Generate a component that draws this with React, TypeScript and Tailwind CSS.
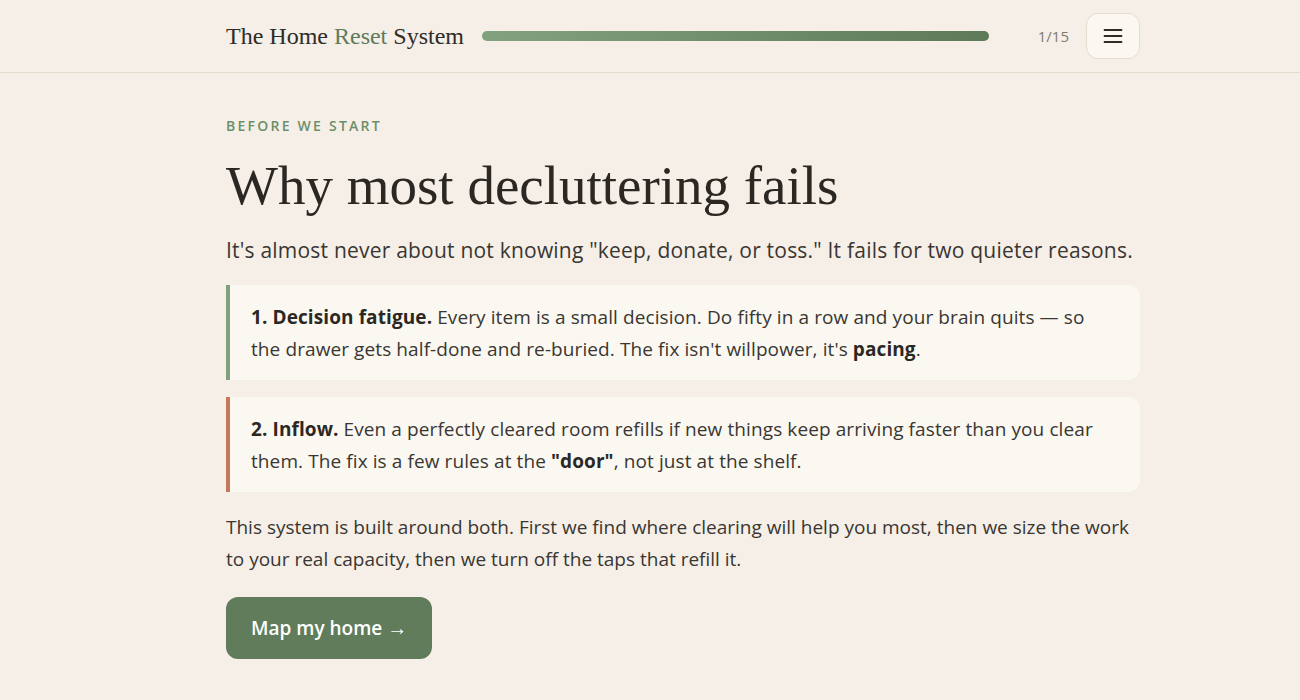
import React from 'react';

const serif = { fontFamily: '"Liberation Serif", "DejaVu Serif", serif' };

function Header() {
  return (
    <header className="h-[73px] border-b border-[#e4dccd]">
      <div className="ml-[226px] flex h-full w-[914px] items-center gap-[18px]">
        <div className="text-[24px] leading-none text-[#2f2b26] whitespace-nowrap" style={serif}>
          The Home <span className="text-[#5f7c5a]">Reset</span> System
        </div>
        <div className="h-[10px] flex-1 rounded-full bg-[#e6dfd3]">
          <div className="h-full w-full rounded-full bg-gradient-to-r from-[#82a27f] to-[#5e7a58]" />
        </div>
        <div className="w-[62px] text-right text-[15px] text-[#807a72]">1/15</div>
        <button className="ml-[-1px] flex h-[46px] w-[54px] items-center justify-center rounded-xl border border-[#e4dccd] bg-[#fbf8f2]">
          <svg width="20" height="16" viewBox="0 0 20 16" fill="none" stroke="#2f2b26" strokeWidth="1.8" strokeLinecap="round">
            <path d="M1.5 2h17M1.5 8h17M1.5 14h17" />
          </svg>
        </button>
      </div>
    </header>
  );
}

function Reason({ border, children }: { border: string; children: React.ReactNode }) {
  return (
    <div className={`rounded-r-xl border-l-4 ${border} bg-[#fbf8f2] pt-[16px] pb-[15px] pl-[21px] pr-6 text-[19px] leading-8 tracking-[0.005em] text-[#3a3631]`}>
      {children}
    </div>
  );
}

export default function App() {
  return (
    <div
      className="min-h-screen bg-[#f5efe8] text-[#2f2b26]"
      style={{ fontFamily: '"Open Sans", "Noto Sans", sans-serif' }}
    >
      <Header />
      <main className="ml-[226px] w-[914px] pt-[42px]">
        <div className="text-[14px] font-semibold uppercase tracking-[0.16em] text-[#6b8f68]">Before we start</div>
        <h1 className="mt-[17px] text-[55px] leading-[66px] text-[#2b2824]" style={serif}>
          Why most decluttering fails
        </h1>
        <p className="mt-[15px] text-[21px] leading-8 tracking-[0.01em] text-[#3a3631]">
          It's almost never about not knowing "keep, donate, or toss." It fails for two quieter reasons.
        </p>
        <div className="mt-[19px] flex flex-col gap-[17px]">
          <Reason border="border-[#7fa07f]">
            <b className="font-bold text-[#2b2824]">1. Decision fatigue.</b> Every item is a small decision. Do fifty in a row and your brain quits — so
            the drawer gets half-done and re-buried. The fix isn't willpower, it's <b className="font-bold text-[#2b2824]">pacing</b>.
          </Reason>
          <Reason border="border-[#c47a5a]">
            <b className="font-bold text-[#2b2824]">2. Inflow.</b> Even a perfectly cleared room refills if new things keep arriving faster than you clear
            them. The fix is a few rules at the <b className="font-bold text-[#2b2824]">"door"</b>, not just at the shelf.
          </Reason>
        </div>
        <p className="mt-[19px] text-[19px] leading-8 text-[#3a3631]">
          This system is built around both. First we find where clearing will help you most, then we size the work
          to your real capacity, then we turn off the taps that refill it.
        </p>
        <button className="mt-[22px] h-[62px] rounded-xl bg-[#607c5a] px-[25px] text-[19px] font-semibold text-white">
          Map my home <span className="text-[20px]">→</span>
        </button>
      </main>
    </div>
  );
}
